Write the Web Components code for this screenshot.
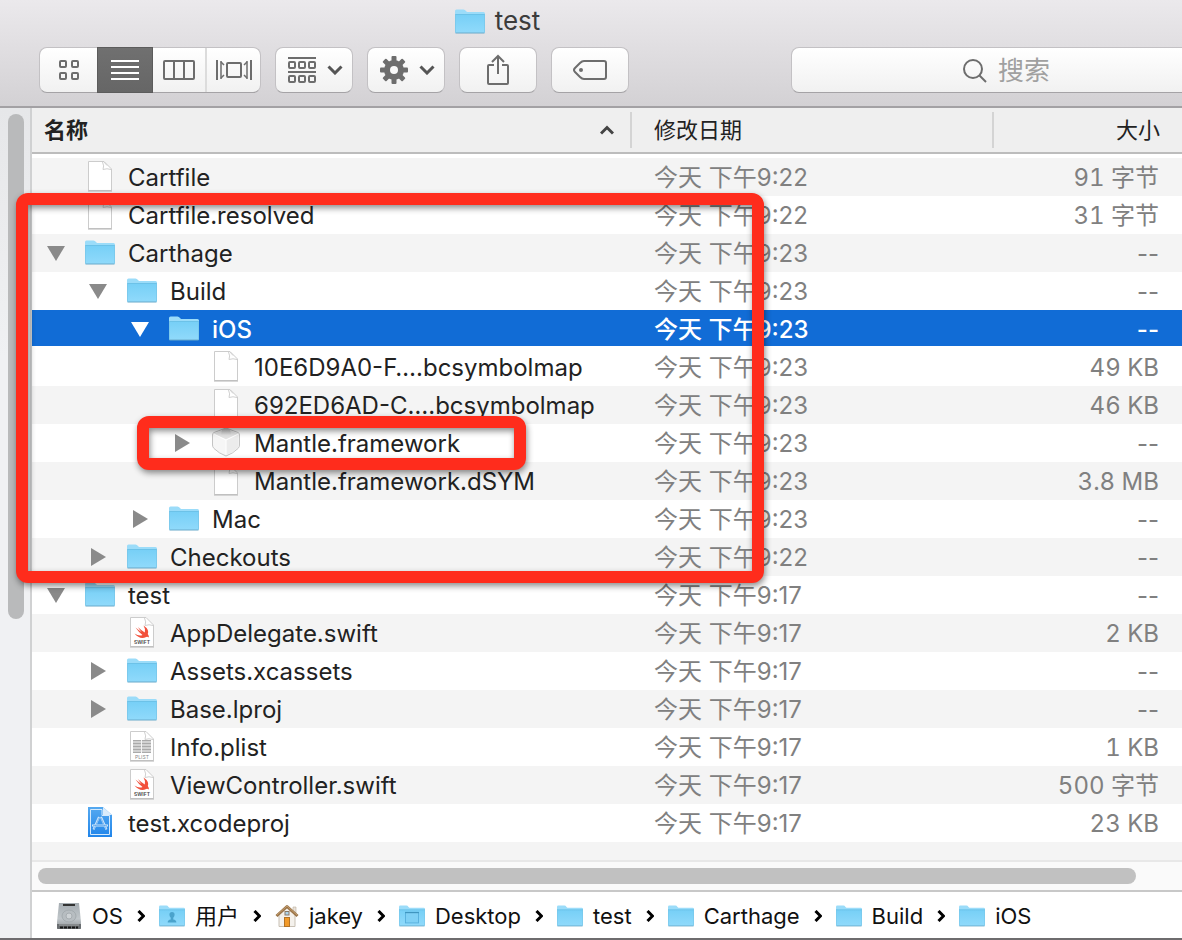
<!DOCTYPE html>
<html lang="zh-CN">
<head>
<meta charset="utf-8">
<title>test</title>
<style>
html, body { margin: 0; height: 100%; }
body { font-family: Inter, "Noto Sans CJK SC", sans-serif; background: #fff; overflow: hidden; }
</style>
</head>
<body>
<finder-window></finder-window>
<script>
const ICONS = {
  folder: [30, 25, `<defs><linearGradient id="g" x1="0" y1="0" x2="0" y2="1"><stop offset="0" stop-color="#76cff6"/><stop offset="1" stop-color="#90dafb"/></linearGradient></defs>
    <path d="M0 2Q0 .5 1.500 .5H8.500Q10 .5 11 2L12 3H28.500Q30 3 30 4.500V23H0Z" fill="#9bdcf9"/>
    <path d="M0 5H30V23Q30 24 29 24H1Q0 24 0 23Z" fill="url(#g)"/><path d="M0 5.500H30" stroke="#6cc2e8"/><path d="M.5 5V23.500M29.500 5V23.500" stroke="#79c6e8" opacity=".7"/><path d="M.5 24H29.500" stroke="#68aaca"/>`],
  doc: [26, 32, `<path d="M1.500 1.500H17L24.500 9V30.500H1.500Z" fill="#fff" stroke="#ccc"/><path d="M1 31H25" stroke="#b4b4b4"/><path d="M15.500 2Q17.500 6 16 9.500Q20 8 24 9.500M17 2L20 5.500" fill="none" stroke="#d0d0d0"/>`],
  swift: [26, 32, `<path d="M1.500 1.500H17L24.500 9V30.500H1.500Z" fill="#fff" stroke="#ccc"/><path d="M1 31H25" stroke="#b4b4b4"/><path d="M15.500 2Q17.500 6 16 9.500Q20 8 24 9.500" fill="none" stroke="#d0d0d0"/>
    <path d="M14.500 9.500Q20.500 13.500 18.800 18Q20.300 20 19.800 21.600Q18.500 20.400 17.200 21Q11 24 5.500 17.500Q10 20.500 13.500 19Q9.500 16 6.500 11.500Q10 14.500 12.500 16Q10.500 13.500 8.800 11Q12.500 14.500 15.800 16.500Q16.800 13 14.500 9.500Z" fill="#f2503b"/>
    <text x="13" y="28" text-anchor="middle" font-size="5" font-weight="600" fill="#444">SWIFT</text>`],
  plist: [26, 32, `<path d="M1.500 1.500H17L24.500 9V30.500H1.500Z" fill="#fff" stroke="#ccc"/><path d="M1 31H25" stroke="#b4b4b4"/><path d="M15.500 2Q17.500 6 16 9.500Q20 8 24 9.500" fill="none" stroke="#d0d0d0"/>
    <rect x="4" y="10" width="18" height="13" fill="#d2d2d2"/><path d="M4 10.500H22M4 13.500H22M4 16.500H22M4 19.500H22M4 22.500H22" stroke="#aaa"/><path d="M12.500 10V23" stroke="#f4f4f4"/>
    <text x="13" y="29" text-anchor="middle" font-size="5" fill="#888">PLIST</text>`],
  kit: [28, 30, `<defs><linearGradient id="k" x1="0" y1="0" x2="0" y2="1"><stop offset="0" stop-color="#c6c6c6"/><stop offset="1" stop-color="#e6e6e6"/></linearGradient></defs>
    <path d="M14 1L26 5.500Q27.500 6 27.500 8V18Q27.500 20 26 21.500Q21 26.500 14 29Q7 26.500 2 21.500Q.5 20 .5 18V8Q.5 6 2 5.500Z" fill="#f6f6f6" stroke="#c4c4c4"/>
    <path d="M26.500 7L14 13V28Q21 25.500 25.500 21Q26.500 20 26.500 18Z" fill="#ececec"/><path d="M2 6.500L14 2L26 6.500L14 12.500Z" fill="#e4e4e4"/>
    <path d="M10 2.500L9 7.500Q14 11 19 7.500L18 2.500L14 1Z" fill="url(#k)"/><path d="M1.500 7L14 13L26.500 7M14 13V28" fill="none" stroke="#fff"/>`],
  xcode: [26, 32, `<defs><linearGradient id="x" x1="0" y1="0" x2="0" y2="1"><stop offset="0" stop-color="#55a9f0"/><stop offset="1" stop-color="#2185ea"/></linearGradient></defs>
    <path d="M1 1H16L25 9V31H1Z" fill="url(#x)"/><path d="M3.500 3.500H15V9.500H22.500V28.500H3.500Z" fill="none" stroke="#d4e9fc"/><path d="M16 1V9H25Z" fill="#d9ebfb"/>
    <path d="M12 11L6.500 23.500M14 11L19.500 23.500" fill="none" stroke="#cfe6fb" stroke-width="2"/><path d="M5 19.500H21" stroke="#cfe6fb" stroke-width="2"/><path d="M12 12L7 23M14 12L19 23M6 19.500H20" stroke="#4a9bea" stroke-width=".6"/>`],
  disk: [26, 28, `<defs><linearGradient id="d" x1="0" y1="0" x2="0" y2="1"><stop offset="0" stop-color="#a6adb2"/><stop offset=".6" stop-color="#c0c6ca"/><stop offset="1" stop-color="#8f9497"/></linearGradient></defs>
    <path d="M3 1H23L25 20V26Q25 27 24 27H2Q1 27 1 26V20Z" fill="url(#d)"/><path d="M1 22H25V26Q25 27 24 27H2Q1 27 1 26Z" fill="#6a6e71"/><path d="M3 23H23" stroke="#a4a8aa"/><path d="M4 25.500H22" stroke="#161616" stroke-width="2" stroke-dasharray="3 1"/><rect x="7" y="2" width="12" height="2" fill="#333"/><ellipse cx="13" cy="14" rx="7" ry="6" fill="#b7bdc1" stroke="#a4abaf"/><circle cx="13" cy="14" r="3" fill="#cdd2d5" stroke="#a7adb1"/>`],
  home: [24, 24, `<path d="M4 10L12 3L20 10V22.500H4Z" fill="#f4f1ec" stroke="#c8c0b4"/><path d="M18 3H21V9L18 7Z" fill="#e8e2da" stroke="#bcae9c" stroke-width=".6"/><path d="M1.500 12L12 2.500L22.500 12" fill="none" stroke="#9b7448" stroke-width="3" stroke-linejoin="round"/><path d="M2 11L12 2L22 11" fill="none" stroke="#c39e6f"/><rect x="9.500" y="13.500" width="5" height="9" fill="#f29a28" stroke="#b37326"/><rect x="10" y="7.500" width="4" height="3.500" fill="#aed4ea" stroke="#8b7964"/>`],
  users: [30, 25, null, `<path d="M10 20Q10 17 13.500 16.500V14.500Q12 13 12 11Q12 8 15 8Q18 8 18 11Q18 13 16.500 14.500V16.500Q20 17 20 20Z" fill="#4aa3cc"/>`],
  desktop: [30, 25, null, `<rect x="7.500" y="8.500" width="15" height="12" fill="#7fd0f5" stroke="#55addb"/><path d="M7 8.500H23" stroke="#3f95bf" stroke-width="1.500"/>`],

  grid: [20, 20, `<g fill="none" stroke="#6d6d6d" stroke-width="2"><rect x="1" y="1" width="6" height="6" rx="1"/><rect x="13" y="1" width="6" height="6" rx="1"/><rect x="1" y="13" width="6" height="6" rx="1"/><rect x="13" y="13" width="6" height="6" rx="1"/></g>`],
  list: [28, 20, `<path d="M0 1H28M0 7H28M0 13H28M0 19H28" stroke="#fff" stroke-width="2"/>`],
  columns: [32, 20, `<g fill="none" stroke="#6d6d6d" stroke-width="2"><rect x="1" y="1" width="30" height="18" rx="1"/><path d="M11 1V19M21 1V19"/></g>`],
  cover: [36, 20, `<g fill="none" stroke="#6d6d6d" stroke-width="2"><rect x="11" y="3" width="14" height="14" rx="1"/><path d="M1 0V20M35 0V20"/><path d="M5 1V19M31 1V19" stroke-width="1.500"/><path d="M5 2L8 5M5 18L8 15M31 2L28 5M31 18L28 15" stroke-width="1.500"/></g>`],
  arrange: [28, 26, `<g fill="none" stroke="#6d6d6d" stroke-width="2"><path d="M0 1H28M0 15H28"/><rect x="1" y="5" width="6" height="6" rx="1"/><rect x="11" y="5" width="6" height="6" rx="1"/><rect x="21" y="5" width="6" height="6" rx="1"/><rect x="1" y="19" width="6" height="6" rx="1"/><rect x="11" y="19" width="6" height="6" rx="1"/><rect x="21" y="19" width="6" height="6" rx="1"/></g>`],
  gear: [28, 28, `<g fill="#6d6d6d">${[0, 45, 90, 135].map(a => `<rect x="11.500" y="0" width="5" height="28" rx="1" transform="rotate(${a} 14 14)"/>`).join("")}<circle cx="14" cy="14" r="10"/></g><circle cx="14" cy="14" r="4" fill="#f8f8f8"/>`],
  share: [24, 32, `<g fill="none" stroke="#6d6d6d" stroke-width="2"><path d="M8 11H3Q2 11 2 12V29Q2 30 3 30H21Q22 30 22 29V12Q22 11 21 11H16M12 20V2M6 8L12 2L18 8"/></g>`],
  tag: [34, 20, `<path d="M11 1H31Q33 1 33 3V17Q33 19 31 19H11Q9 19 7 17L2 12Q0 10 2 8L7 3Q9 1 11 1Z" fill="none" stroke="#6d6d6d" stroke-width="2"/><circle cx="8" cy="10" r="2" fill="#6d6d6d"/>`],
  search: [24, 24, `<g fill="none" stroke="#6d6d6d" stroke-width="2"><circle cx="10" cy="10" r="9"/><path d="M16 16L23 23"/></g>`],
  down: [16, 10, `<path d="M1.500 1.500L8 8L14.500 1.500" fill="none" stroke="#555" stroke-width="3"/>`],
  sort: [14, 10, `<path d="M1 8.500L7 2.500L13 8.500" fill="none" stroke="#444" stroke-width="3"/>`],
  crumb: [8, 12, `<path d="M1.500 1L6.500 6L1.500 11" fill="none" stroke="#000" stroke-width="3"/>`],
  open: [18, 15, `<path d="M0 0H18L9 15Z" fill="currentColor"/>`],
  closed: [15, 18, `<path d="M0 0V18L15 9Z" fill="currentColor"/>`],
};

class UiIcon extends HTMLElement {
  connectedCallback() {
    const [w, h, art, extra] = ICONS[this.getAttribute("name")];
    const width = Number(this.getAttribute("width")) || w;
    const root = this.shadowRoot || this.attachShadow({ mode: "open" });
    root.innerHTML = `<style>:host{display:block;flex:none;line-height:0}svg{display:block;font-family:Inter,sans-serif}</style>
      <svg width="${width}" height="${Math.round(h * width / w)}" viewBox="0 0 ${w} ${h}" aria-hidden="true">${art || ICONS.folder[2]}${extra || ""}</svg>`;
  }
}
customElements.define("ui-icon", UiIcon);

class ToolButton extends HTMLElement {
  constructor() {
    super();
    this.attachShadow({ mode: "open" }).innerHTML = `<style>
      :host { display: block; flex: none; }
      button { display: flex; align-items: center; justify-content: center; gap: 11px; box-sizing: border-box; width: 78px; height: 46px; margin: 0; padding: 0;
        border: 1px solid #c3c1c4; border-bottom-color: #a5a3a6; border-radius: 8px; background: linear-gradient(#fff, #f1f1f1); }
      :host([menu]) button { padding-left: 2px; }
    </style><button type="button"><slot></slot></button>`;
  }
  connectedCallback() { this.shadowRoot.querySelector("button").setAttribute("aria-label", this.getAttribute("label")); }
}
customElements.define("tool-button", ToolButton);

class ViewSwitch extends HTMLElement {
  constructor() {
    super();
    this.attachShadow({ mode: "open" }).innerHTML = `<style>
      :host { display: flex; flex: none; box-sizing: border-box; height: 46px; border: 1px solid #c3c1c4; border-bottom-color: #a5a3a6; border-radius: 8px; background: linear-gradient(#fff, #f1f1f1); }
      button { display: flex; align-items: center; justify-content: center; box-sizing: border-box; width: 52px; margin: 0; padding: 0; border: 0; background: none; }
      button:first-of-type { width: 57px; }
      button[aria-pressed=true] { width: 56px; margin: -1px 0; border: 1px solid #5c5c5c; background: linear-gradient(#707070, #666); }
      button:last-of-type { width: 55px; border-left: 2px solid #dcdcdc; }
    </style>
    <button type="button" aria-label="图标"><ui-icon name="grid"></ui-icon></button>
    <button type="button" aria-label="列表" aria-pressed="true"><ui-icon name="list"></ui-icon></button>
    <button type="button" aria-label="分栏"><ui-icon name="columns"></ui-icon></button>
    <button type="button" aria-label="Cover Flow"><ui-icon name="cover"></ui-icon></button>`;
  }
}
customElements.define("view-switch", ViewSwitch);

class SearchField extends HTMLElement {
  constructor() {
    super();
    this.attachShadow({ mode: "open" }).innerHTML = `<style>
      :host { display: block; }
      label { display: flex; align-items: center; justify-content: center; gap: 11px; box-sizing: border-box; height: 46px; padding: 2px 0 0 2px; border: 1px solid #c3c1c4; border-bottom-color: #a5a3a6; border-radius: 8px; background: linear-gradient(#fff, #f1f1f1); }
      input { width: 52px; height: 40px; box-sizing: border-box; margin: 0; padding: 0; border: 0; outline: 0; background: none; font: 26px/40px Inter, "Noto Sans CJK SC", sans-serif; }
      input::placeholder { color: #a0a0a0; opacity: 1; }
    </style><label><ui-icon name="search"></ui-icon><input type="text" aria-label="搜索" placeholder="搜索"></label>`;
  }
}
customElements.define("search-field", SearchField);

class FinderToolbar extends HTMLElement {
  constructor() {
    super();
    this.attachShadow({ mode: "open" }).innerHTML = `<style>
      :host { display: block; box-sizing: border-box; height: 108px; overflow: hidden; border-bottom: 2px solid #a3a1a4; background: linear-gradient(#ebe9ec, #d3d1d4); }
      .title { display: flex; align-items: center; justify-content: center; gap: 10px; height: 42px; padding-right: 187px; color: #3c3c3c; font-size: 26px; line-height: 42px; }
      .tools { display: flex; gap: 14px; padding: 5px 0 0 39px; }
      search-field { flex: 1; margin: 0 -38px 0 148px; }
    </style>
    <div class="title"><ui-icon name="folder"></ui-icon><span>test</span></div>
    <div class="tools">
      <view-switch></view-switch>
      <tool-button menu label="排列"><ui-icon name="arrange"></ui-icon><ui-icon name="down"></ui-icon></tool-button>
      <tool-button menu label="操作"><ui-icon name="gear"></ui-icon><ui-icon name="down"></ui-icon></tool-button>
      <tool-button label="共享"><ui-icon name="share"></ui-icon></tool-button>
      <tool-button label="标记"><ui-icon name="tag"></ui-icon></tool-button>
      <search-field></search-field>
    </div>`;
  }
}
customElements.define("finder-toolbar", FinderToolbar);

class TreeEntry extends HTMLElement {
  connectedCallback() {
    const level = Number(this.getAttribute("level"));
    const state = this.getAttribute("state");
    const root = this.shadowRoot || this.attachShadow({ mode: "open" });
    root.innerHTML = `<style>
      :host { display: flex; height: 36px; padding-left: calc(${level} * 42px); white-space: nowrap; }
      .arrow, .icon { display: flex; align-items: center; justify-content: center; flex: none; width: 48px; height: 38px; color: var(--arrow, #8a8a8a); }
      .icon { width: 40px; height: 36px; margin-right: 8px; }
      .label { padding-top: 4px; line-height: 32px; }
    </style>
    <span class="arrow">${state ? `<ui-icon name="${state}"></ui-icon>` : ""}</span>
    <span class="icon"><ui-icon name="${this.getAttribute("icon")}"></ui-icon></span><span class="label"><slot></slot></span>`;
  }
}
customElements.define("tree-entry", TreeEntry);

const FILES = [
  [0, "", "doc", "Cartfile", "9:22", "91 字节"],
  [0, "", "doc", "Cartfile.resolved", "9:22", "31 字节"],
  [0, "open", "folder", "Carthage", "9:23", "--"],
  [1, "open", "folder", "Build", "9:23", "--"],
  [2, "open", "folder", "iOS", "9:23", "--", true],
  [3, "", "doc", "10E6D9A0-F….bcsymbolmap", "9:23", "49 KB"],
  [3, "", "doc", "692ED6AD-C….bcsymbolmap", "9:23", "46 KB"],
  [3, "closed", "kit", "Mantle.framework", "9:23", "--"],
  [3, "", "doc", "Mantle.framework.dSYM", "9:23", "3.8 MB"],
  [2, "closed", "folder", "Mac", "9:23", "--"],
  [1, "closed", "folder", "Checkouts", "9:22", "--"],
  [0, "open", "folder", "test", "9:17", "--"],
  [1, "", "swift", "AppDelegate.swift", "9:17", "2 KB"],
  [1, "closed", "folder", "Assets.xcassets", "9:17", "--"],
  [1, "closed", "folder", "Base.lproj", "9:17", "--"],
  [1, "", "plist", "Info.plist", "9:17", "1 KB"],
  [1, "", "swift", "ViewController.swift", "9:17", "500 字节"],
  [0, "", "xcode", "test.xcodeproj", "9:17", "23 KB"],
];

class FileTable extends HTMLElement {
  constructor() {
    super();
    const rows = FILES.map(([level, state, icon, name, time, size, on]) => `<tr${on ? ' class="on" aria-selected="true"' : ""}>
      <td><tree-entry level="${level}" state="${state}" icon="${icon}">${name}</tree-entry></td><td class="date">今天 下午${time}</td><td class="size${size === "--" ? "" : " known"}">${size}</td></tr>`).join("");
    this.attachShadow({ mode: "open" }).innerHTML = `<style>
      :host { display: block; background: #fff; }
      table { width: 100%; table-layout: fixed; border-collapse: separate; border-spacing: 0; font-size: 24px; line-height: 32px; color: #222; }
      col.date { width: 362px; } col.size { width: 190px; }
      th { padding: 0 0 4px; font-size: 22px; font-weight: 400; text-align: left; color: #222; }
      th > div { display: flex; align-items: center; height: 44px; background: #efefef; border-bottom: 2px solid #bcbcbc; }
      th span { flex: 1; box-sizing: border-box; border-left: 2px solid #d4d4d4; padding-left: 22px; line-height: 36px; }
      th:first-child span { border: 0; padding-left: 12px; font-weight: 700; }
      th:last-child span { text-align: right; padding-right: 22px; }
      th ui-icon { margin-right: 16px; }
      td { box-sizing: border-box; height: 38px; padding: 0; overflow: hidden; white-space: nowrap; border-bottom: 2px solid transparent; }
      tbody tr:nth-child(odd) { background: #f4f4f4; }
      td.date { padding: 4px 0 0 24px; color: #808080; }
      td.size { padding: 4px 23px 0 0; text-align: right; color: #808080; }
      td.known { font-variant-numeric: tabular-nums; }
      tbody tr.on { background: #fff; }
      .on td, .on td.date, .on td.size { --arrow: #fff; background: #116cd6 padding-box; color: #fff; font-weight: 500; }
    </style>
    <table><colgroup><col><col class="date"><col class="size"></colgroup>
      <thead><tr><th scope="col"><div><span>名称</span><ui-icon name="sort"></ui-icon></div></th><th scope="col"><div><span>修改日期</span></div></th><th scope="col"><div><span>大小</span></div></th></tr></thead>
      <tbody>${rows}</tbody></table>`;
  }
}
customElements.define("file-table", FileTable);

class PathBar extends HTMLElement {
  constructor() {
    super();
    const steps = [["disk", "OS"], ["users", "用户"], ["home", "jakey"], ["desktop", "Desktop"], ["folder", "test"], ["folder", "Carthage"], ["folder", "Build"], ["folder", "iOS"]];
    this.attachShadow({ mode: "open" }).innerHTML = `<style>
      :host { display: block; background: #fff; }
      nav { display: flex; align-items: center; gap: 14px; height: 46px; padding: 2px 0 0 24px; box-sizing: border-box; white-space: nowrap; }
      a { display: flex; align-items: center; gap: 10px; color: #111; text-decoration: none; font-size: 22px; line-height: 32px; }
    </style><nav aria-label="路径">${steps.map(([icon, name]) => `<a href="#${name}"><ui-icon name="${icon}" width="${icon === "home" ? 24 : 26}"></ui-icon><span>${name}</span></a>`).join('<ui-icon name="crumb"></ui-icon>')}</nav>`;
  }
}
customElements.define("path-bar", PathBar);

/* Red frame laid over the list to call out a region. */
class CalloutFrame extends HTMLElement {
  constructor() {
    super();
    this.attachShadow({ mode: "open" }).innerHTML = `<style>
      :host { display: block; position: absolute; box-sizing: border-box; border: 12px solid #ff2c1c; border-radius: 12px; filter: drop-shadow(1px 3px 3px rgba(0,0,0,.45)); pointer-events: none; }
    </style>`;
  }
}
customElements.define("callout-frame", CalloutFrame);

class FinderWindow extends HTMLElement {
  constructor() {
    super();
    this.attachShadow({ mode: "open" }).innerHTML = `<style>
      :host { display: flex; flex-direction: column; position: relative; box-sizing: border-box; min-height: 100vh; border-bottom: 2px solid #6e6c6e; }
      .body { display: flex; flex: 1; }
      aside { box-sizing: border-box; width: 32px; padding: 6px 0 0 8px; border-right: 2px solid #d0d1d2; background: linear-gradient(#e6e7e9, #f0f1f3 30%); }
      aside div { width: 16px; height: 505px; border-radius: 8px; background: #b9babb; }
      main { display: flex; flex-direction: column; flex: 1; min-width: 0; }
      .rest { flex: 1; background: #f4f4f4; }
      .track { box-sizing: border-box; height: 32px; padding: 6px 46px 0 6px; border-top: 2px solid #e8e8e8; border-bottom: 2px solid #c8c8c8; background: #fafafa; }
      .track div { height: 16px; border-radius: 8px; background: #c1c1c1; }
      .outer { left: 16px; top: 193px; width: 748px; height: 390px; }
      .inner { left: 137px; top: 416px; width: 389px; height: 54px; }
    </style>
    <finder-toolbar></finder-toolbar>
    <div class="body"><aside><div></div></aside>
      <main><file-table></file-table><div class="rest"></div><div class="track"><div></div></div><path-bar></path-bar></main></div>
    <callout-frame class="outer"></callout-frame><callout-frame class="inner"></callout-frame>`;
  }
}
customElements.define("finder-window", FinderWindow);
</script>
</body>
</html>
